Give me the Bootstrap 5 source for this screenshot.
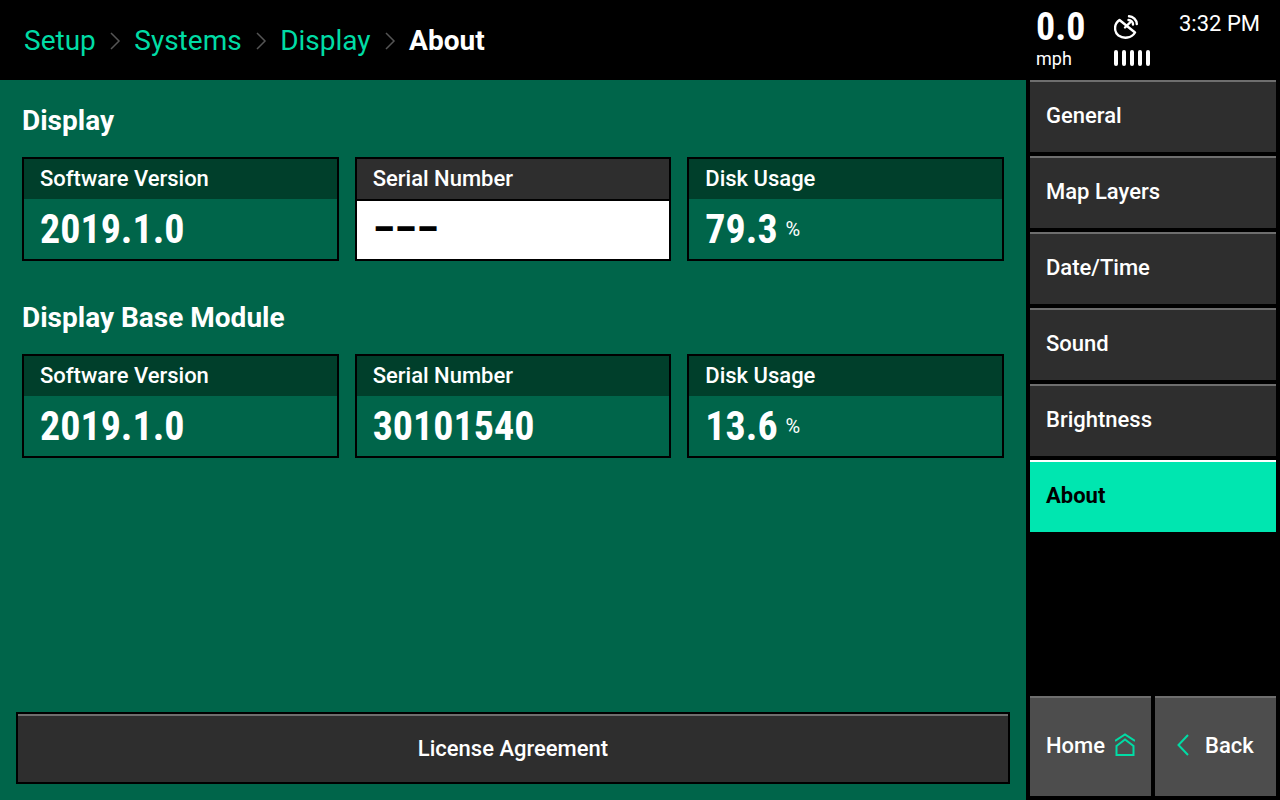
<!DOCTYPE html>
<html lang="en"><head><meta charset="utf-8"><title>About</title>
<link href="https://cdn.jsdelivr.net/npm/bootstrap@5.3.0/dist/css/bootstrap.min.css" rel="stylesheet">
<style>
html,body{height:100%;margin:0}
body{width:1280px;height:800px;overflow:hidden;background:#000;color:#fff;font-family:Roboto,"Liberation Sans",sans-serif}
.topbar{height:80px;background:#000}
.crumbs{padding:2px 0 0 24px;font-size:28px;line-height:78px}
.crumbs a{color:#00dca5;text-decoration:none}
.crumbs svg{margin:0 13px 0 13.500px}
.crumbs b{font-weight:700;color:#fff}
.status{width:254px}
.speed{padding:9px 0 0 10px;width:88px}
.cond{display:inline-block;font-weight:700;font-family:"Roboto Condensed","Liberation Sans Narrow",Roboto,sans-serif;font-stretch:condensed}
.speed .cond{font-size:38px;line-height:36px}
.speed .unit{font-size:18px;line-height:22px;margin-top:1px}
.sat{width:36px;padding-top:15px}
.sat svg{display:block}
.bars{gap:4px;margin-top:11px}
.bars i{display:block;width:4px;height:16px;border-radius:2px;background:#fff}
.clock{font-size:22px;line-height:26px;padding:11px 0 0 29px}
.mainarea{height:720px}
.content{width:1026px;background:#00654a;padding:0 16px 16px}
.sect{font-size:28px;font-weight:700;line-height:30px;margin:0 0 0 6px;padding-top:26px;height:77px}
.sect.second{height:76px;padding-top:25px;margin-top:17px}
.info{display:grid;grid-template-columns:repeat(3,1fr);gap:16px;margin:0 6px}
.tile{height:104px;border:2px solid #000;border-radius:0;background:transparent;color:#fff}
.tile .card-header{height:40px;padding:0 16px;border:0;border-radius:0;background:#003f2b;font-size:22px;font-weight:500;line-height:40px;color:#fff}
.tile .card-header.dark{background:#2e2e2e;height:42px;border-bottom:2px solid #000}
.tile .card-body{padding:2px 16px 0;line-height:58px;font-size:40px}
.tile .card-body.blank{background:#fff;color:#000;padding-top:0}
.val{font-size:40px}
.pct{font-size:20px;margin-left:8px;font-weight:400;position:relative;top:-7px}
.lic{margin-top:auto;height:72px;width:994px;border:2px solid #000;border-radius:0;background:#2e2e2e;color:#fff;font-size:22px;font-weight:500;box-shadow:inset 0 2px 0 #6e6e6e;padding:0}
.lic:hover,.lic:active{background:#2e2e2e;color:#fff;border-color:#000}
.side{width:254px;padding:0 4px 4px}
.navbtn{height:72px;width:246px;margin-bottom:4px;padding:0 16px;text-align:left;border:0;border-radius:0;background:#2e2e2e;color:#fff;font-size:22px;font-weight:500;box-shadow:inset 0 2px 0 #6e6e6e;line-height:70px}
.navbtn.on{background:#00e6b0;color:#000;box-shadow:inset 0 2px 0 #fff;font-weight:700}
.foot{margin-top:auto;gap:4px}
.footbtn{width:121px;height:100px;padding:0 0 2px 16px;border:0;border-radius:0;background:#4d4d4d;color:#fff;font-size:22px;font-weight:500;box-shadow:inset 0 2px 0 #6e6e6e;gap:10px}
.footbtn.back{padding-left:22px;gap:16px}
</style></head>
<body class="d-flex flex-column">
<header class="topbar d-flex justify-content-between">
  <nav class="crumbs d-flex align-items-center">
    <a href="#">Setup</a><svg width="12" height="20" viewBox="0 0 12 20" fill="none" stroke="#555" stroke-width="1.5"><path d="M2 2l8 8-8 8"/></svg>
    <a href="#">Systems</a><svg width="12" height="20" viewBox="0 0 12 20" fill="none" stroke="#555" stroke-width="1.5"><path d="M2 2l8 8-8 8"/></svg>
    <a href="#">Display</a><svg width="12" height="20" viewBox="0 0 12 20" fill="none" stroke="#555" stroke-width="1.5"><path d="M2 2l8 8-8 8"/></svg>
    <b>About</b>
  </nav>
  <div class="status d-flex">
    <div class="speed"><div class="cond">0.0</div><div class="unit">mph</div></div>
    <div class="sat">
      <svg width="24" height="24" viewBox="0 0 24 24" fill="none" stroke="#fff" stroke-width="2.400" stroke-linecap="round" stroke-linejoin="round"><path d="M5.500 5C-.5 9 0 17 4.500 20.500c5 3.500 13 3 16.500-3z"/><path d="M11 12.500l6-6"/><path d="M14.500 5c2.500 0 4.500 2 4.500 4.500"/><path d="M15 1.200c4 0 7.800 3.800 7.800 7.800"/></svg>
      <div class="bars d-flex"><i></i><i></i><i></i><i></i><i></i></div>
    </div>
    <div class="clock">3:32 PM</div>
  </div>
</header>
<div class="mainarea d-flex">
  <main class="content d-flex flex-column">
    <h2 class="sect">Display</h2>
    <div class="info">
      <div class="card tile"><div class="card-header">Software Version</div><div class="card-body"><span class="cond val">2019.1.0</span></div></div>
      <div class="card tile"><div class="card-header dark">Serial Number</div><div class="card-body blank"><span class="cond val">–––</span></div></div>
      <div class="card tile"><div class="card-header">Disk Usage</div><div class="card-body"><span class="cond val">79.3</span><span class="pct">%</span></div></div>
    </div>
    <h2 class="sect second">Display Base Module</h2>
    <div class="info">
      <div class="card tile"><div class="card-header">Software Version</div><div class="card-body"><span class="cond val">2019.1.0</span></div></div>
      <div class="card tile"><div class="card-header">Serial Number</div><div class="card-body"><span class="cond val">30101540</span></div></div>
      <div class="card tile"><div class="card-header">Disk Usage</div><div class="card-body"><span class="cond val">13.6</span><span class="pct">%</span></div></div>
    </div>
    <button class="btn lic" type="button">License Agreement</button>
  </main>
  <aside class="side d-flex flex-column">
    <button class="btn navbtn" type="button">General</button>
    <button class="btn navbtn" type="button">Map Layers</button>
    <button class="btn navbtn" type="button">Date/Time</button>
    <button class="btn navbtn" type="button">Sound</button>
    <button class="btn navbtn" type="button">Brightness</button>
    <button class="btn navbtn on" type="button">About</button>
    <div class="foot d-flex">
      <button class="btn footbtn d-flex align-items-center" type="button">Home<svg width="20" height="24" viewBox="0 0 20 24" fill="none" stroke="#00dca5" stroke-width="2"><path d="M0 8L10 1.500 20 8"/><path d="M1.500 13L10 6.500 18.500 13V22H1.500z"/></svg></button>
      <button class="btn footbtn back d-flex align-items-center" type="button"><svg width="12" height="22" viewBox="0 0 12 22" fill="none" stroke="#00dca5" stroke-width="2"><path d="M11 1L1.500 11 11 21"/></svg>Back</button>
    </div>
  </aside>
</div>
</body></html>
